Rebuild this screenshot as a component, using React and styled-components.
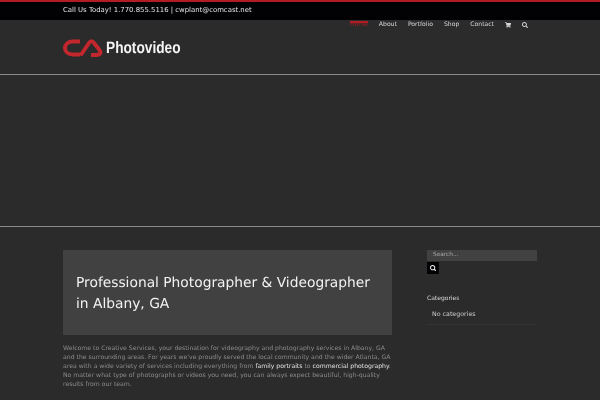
import React from 'react';
import styled, { createGlobalStyle } from 'styled-components';
import { FaShoppingCart, FaSearch } from 'react-icons/fa';

const GlobalStyle = createGlobalStyle`
  html, body {
    margin: 0;
    padding: 0;
    height: 400px;
    overflow: hidden;
    background: #2b2b2b;
    font-family: "DejaVu Sans", sans-serif;
    text-rendering: geometricPrecision;
  }
`;

const Page = styled.div`
  width: 600px;
  height: 400px;
  overflow: hidden;
  background: #2b2b2b;
  filter: blur(0.3px);
`;

const TopBar = styled.div`
  height: 18px;
  background: #020204;
  border-top: 2px solid #b01c22;
  padding-left: 63px;
  color: #e6e6e6;
  font-size: 6.9px;
  line-height: 17px;
`;

const Header = styled.header`
  height: 54px;
  border-bottom: 1px solid #8a8a8a;
  padding: 0 72px 0 63px;
  display: flex;
  justify-content: space-between;
  align-items: flex-start;
`;

const Logo = styled.div`
  display: flex;
  align-items: center;
  gap: 3px;
  margin-top: 18px;
`;

const LogoText = styled.span`
  font-family: "Liberation Sans", sans-serif;
  font-weight: 700;
  font-size: 16.5px;
  color: #f4f4f4;
  transform: scaleX(0.83);
  transform-origin: left center;
`;

const Nav = styled.nav`
  display: flex;
  align-items: flex-start;
  gap: 11px;
`;

const NavItem = styled.a`
  position: relative;
  display: flex;
  align-items: center;
  height: 9px;
  font-size: 6.1px;
  line-height: 9px;
  color: ${p => (p.$active ? '#a01e22' : '#d8d8d8')};

  &::before {
    content: '';
    display: ${p => (p.$active ? 'block' : 'none')};
    position: absolute;
    top: 1px;
    left: 0;
    right: 0;
    height: 2px;
    background: #b01c22;
  }
`;

const Banner = styled.section`
  height: 151px;
  border-bottom: 1px solid #8a8a8a;
`;

const Content = styled.main`
  display: grid;
  grid-template-columns: 329px 110px;
  column-gap: 35px;
  padding: 23px 0 0 63px;
`;

const Hero = styled.div`
  height: 85px;
  box-sizing: border-box;
  background: #414141;
  padding: 23px 13px 0;
  color: #f2f2f2;
  font-size: 13.8px;
  line-height: 21px;
`;

const Body = styled.p`
  margin: 9px 0 0;
  font-size: 6.15px;
  line-height: 9.1px;
  color: #8c8c8c;

  a {
    color: #e4e4e4;
  }
`;

const Sidebar = styled.aside`
  color: #d0d0d0;
`;

const SearchField = styled.div`
  height: 11px;
  background: #414141;
  padding-left: 6px;
  font-size: 5.8px;
  line-height: 11px;
  color: #a8a8a8;
`;

const SearchButton = styled.div`
  width: 12px;
  height: 12px;
  margin-top: 1px;
  background: #020204;
  color: #f0f0f0;
  display: flex;
  align-items: center;
  justify-content: center;
  font-size: 6.5px;
`;

const WidgetTitle = styled.h4`
  margin: 20px 0 0;
  font-size: 6px;
  font-weight: 400;
  line-height: 10px;
  color: #d8d8d8;
`;

const WidgetRow = styled.div`
  margin-top: 5px;
  padding: 0 0 4px 5px;
  height: 11px;
  font-size: 6.3px;
  line-height: 11px;
  border-bottom: 1px solid #333333;
  color: #cccccc;
`;

const App = () => (
  <Page>
    <GlobalStyle />
    <TopBar>Call Us Today! 1.770.855.5116 | cwplant@comcast.net</TopBar>
    <Header>
      <Logo>
        <svg width="40" height="20" viewBox="0 0 40 20" fill="none" stroke="#c1272d" strokeWidth="4" strokeLinecap="butt" strokeLinejoin="round">
          <path d="M17 3.5 H10 C5 3.5 2 6.5 2 10 C2 13.5 5 16.5 10 16.5 H17" />
          <path d="M17.5 17.5 L26 5 C27.5 2.5 29.5 2.5 31 5 L36.5 12 C38.5 15 37 17 33.5 17 H28" />
        </svg>
        <LogoText>Photovideo</LogoText>
      </Logo>
      <Nav>
        <NavItem $active>Home</NavItem>
        <NavItem>About</NavItem>
        <NavItem>Portfolio</NavItem>
        <NavItem>Shop</NavItem>
        <NavItem>Contact</NavItem>
        <NavItem><FaShoppingCart size={6} /></NavItem>
        <NavItem><FaSearch size={6} /></NavItem>
      </Nav>
    </Header>
    <Banner />
    <Content>
      <div>
        <Hero>Professional Photographer &amp; Videographer in Albany, GA</Hero>
        <Body>
          Welcome to Creative Services, your destination for videography and photography services in Albany, GA and the surrounding areas. For years we've proudly served the local community and the wider Atlanta, GA area with a wide variety of services including everything from <a>family portraits</a> to <a>commercial photography</a>. No matter what type of photographs or videos you need, you can always expect beautiful, high-quality results from our team.
        </Body>
      </div>
      <Sidebar>
        <SearchField>Search...</SearchField>
        <SearchButton><FaSearch /></SearchButton>
        <WidgetTitle>Categories</WidgetTitle>
        <WidgetRow>No categories</WidgetRow>
      </Sidebar>
    </Content>
  </Page>
);

export default App;
